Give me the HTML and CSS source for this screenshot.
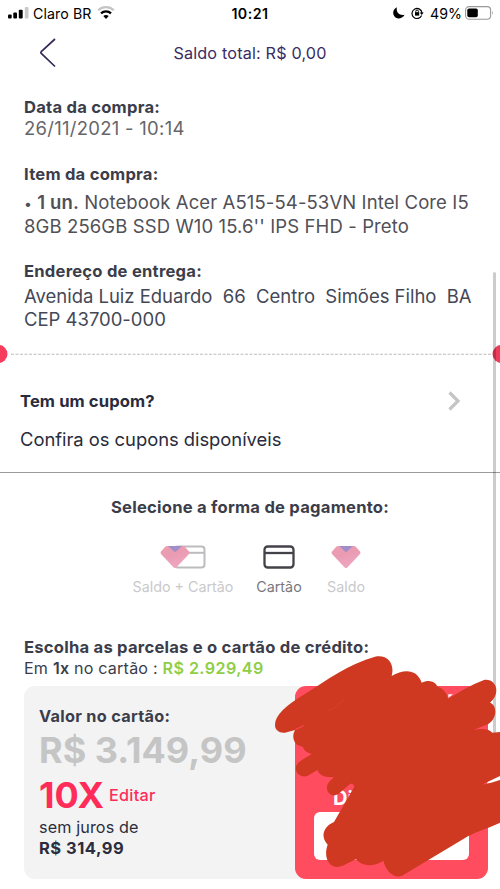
FILE: index.html
```html
<!DOCTYPE html>
<html lang="pt-BR">
<head>
<meta charset="utf-8">
<title>Pagamento</title>
<link rel="stylesheet" href="styles.css">
</head>
<body>
<div class="screen">
  <div class="status">
    <div class="status-left">
      <svg width="21" height="12" viewBox="0 0 21 12"><rect x="0" y="7.5" width="3.7" height="4" rx="1"/><rect x="5.3" y="5.5" width="3.7" height="6" rx="1"/><rect x="10.8" y="2.8" width="3.9" height="8.7" rx="1"/><rect x="16.8" y="0" width="3.7" height="11.5" rx="1" fill="#c9c9cb"/></svg>
      <span class="carrier">Claro BR</span>
      <svg width="18" height="14" viewBox="0 0 18 14" fill="none"><path d="M1.200 4.300C5.500.1 12.500.1 16.800 4.300" stroke="#c4c4c6" stroke-width="2.200"/><path d="M4 7.300c2.800-2.700 7.200-2.700 10 0" stroke="#000" stroke-width="2.300"/><path d="M6.300 10c1.600-1.500 3.800-1.500 5.400 0L9 12.900z" fill="#000"/></svg>
    </div>
    <span class="clock">10:21</span>
    <div class="status-right">
      <svg width="12" height="12" viewBox="0 0 12 12"><path d="M4 .3C2.600 5.500 6.500 9 11.600 7.700 8.800 12.700 2.800 12.500.9 8.600-.8 5.200.7 1.800 4 .3z"/></svg>
      <svg class="lock" width="13" height="12" viewBox="0 0 13 12" fill="none" stroke="#000" stroke-width="1.200"><path d="M10.600 8.500A5 5 0 1 1 11 6"/><path d="M8.700 5.500h4L10.800 8z" fill="#000" stroke="none"/><rect x="4" y="5.200" width="4.200" height="3.400" fill="#000" stroke="none"/><path d="M4.800 5.500V4.300a1.300 1.300 0 0 1 2.600 0v1.200" stroke-width="1"/></svg>
      <span class="percent">49%</span>
      <svg width="29" height="14" viewBox="0 0 29 14"><rect x=".6" y=".6" width="25" height="12.600" rx="3.500" fill="none" stroke="#999" stroke-width="1.100"/><rect x="2.300" y="2.500" width="10.500" height="8.800" rx="1.800"/><path d="M27.200 4.800q1.500 2 0 4z" fill="#999"/></svg>
    </div>
  </div>
  <header class="header">
    <svg class="back" width="18" height="30" viewBox="0 0 18 30" fill="none" stroke="#352758" stroke-width="1.700"><path d="M16 1 2.500 13.300q-1.300 1.200 0 2.400L16 28.500"/></svg>
    <span class="saldo">Saldo total: R$ 0,00</span>
  </header>
  <section class="details">
    <h2>Data da compra:</h2>
    <p class="date">26/11/2021 - 10:14</p>
    <h2>Item da compra:</h2>
    <p class="item"><small>•</small> <b>1 un.</b> Notebook Acer A515-54-53VN Intel Core I5<br>8GB 256GB SSD W10 15.6'' IPS FHD - Preto</p>
    <h2>Endereço de entrega:</h2>
    <p class="address">Avenida Luiz Eduardo&nbsp; 66&nbsp; Centro&nbsp; Simões Filho&nbsp; BA<br>CEP 43700-000</p>
  </section>
  <div class="perforation">
    <svg width="500" height="18" viewBox="0 0 500 18"><path d="M11 9.300H492" stroke="#bdbdc0" stroke-width="1.100" stroke-dasharray="3 1.500"/><circle cx="-1.500" cy="9" r="9" fill="#f73d5c"/><circle cx="501.500" cy="9" r="9" fill="#ee3b5a"/></svg>
  </div>
  <section class="coupon">
    <div class="coupon-row">
      <h2>Tem um cupom?</h2>
      <svg width="13" height="20" viewBox="0 0 13 20" fill="none" stroke="#c5c5c5" stroke-width="3.200"><path d="m1.500 1.500 8.500 8.500-8.500 8.500"/></svg>
    </div>
    <p>Confira os cupons disponíveis</p>
  </section>
  <section class="payment">
    <h2>Selecione a forma de pagamento:</h2>
    <div class="methods">
      <div class="method method-both">
        <svg width="46" height="24" viewBox="0 0 46 24"><rect x="15" y="1.500" width="29.500" height="21" rx="3" fill="#fff" stroke="#bcbcbe" stroke-width="2"/><path d="M20 7.800h24" stroke="#bcbcbe" stroke-width="2"/><use href="#heart"/></svg>
        <span>Saldo + Cartão</span>
      </div>
      <div class="method method-card">
        <svg width="32" height="24" viewBox="0 0 32 24" fill="none" stroke="#454149" stroke-width="2.300"><rect x="1.500" y="1.500" width="29" height="21" rx="3.200"/><path d="M2 8h28"/></svg>
        <span>Cartão</span>
      </div>
      <div class="method method-saldo">
        <svg width="30" height="24" viewBox="0 0 30 24"><defs><linearGradient id="pink" x1="0" y1="0" x2=".4" y2="1"><stop stop-color="#ef9fae"/><stop offset=".45" stop-color="#e99bb2"/><stop offset="1" stop-color="#efa5c0"/></linearGradient></defs><g id="heart"><path d="M7 1h16q1 0 2 1l4 4.500q1 1.300 0 2.500L16.300 22.600q-1.300 1-2.600 0L1 9Q0 7.700 1 6.500L5 2q1-1 2-1z" fill="url(#pink)"/><path d="M8 1h14l-6 5.600q-1 .8-2 0z" fill="#a08dca"/></g></svg>
        <span>Saldo</span>
      </div>
    </div>
  </section>
  <section class="installments">
    <h2>Escolha as parcelas e o cartão de crédito:</h2>
    <p class="once">Em <b>1x</b> no cartão : <strong>R$ 2.929,49</strong></p>
    <div class="cards">
      <div class="value-card">
        <h3>Valor no cartão:</h3>
        <div class="total">R$ 3.149,99</div>
        <div class="times"><strong>10X</strong><span>Editar</span></div>
        <p class="interest">sem juros de</p>
        <p class="parcel">R$ 314,99</p>
      </div>
      <div class="credit-card">
        <div class="card-label">Di</div>
        <div class="card-field"></div>
      </div>
    </div>
  </section>
  <i class="scrollbar"></i>
  <svg class="scribble" width="240" height="249" viewBox="0 0 720 747"><path fill="#fff" d="M565 163h14l-14 10zM680 433l5-12 35-16v16z"/><path fill="#cf3921" d="M45 255C45 225 80 195 130 165 200 120 270 70 345 50c38-8 60 22 50 58 35-20 75-23 90 20 25-12 43 0 47 12 18 5 30 20 32 36 36-21 72-43 108-56 37-5 52 40 18 68 22 7 22 47-5 64l-45 18c25-5 45-5 57 8l23-2V408l-55 26c25-4 40-9 55-14V548c-30 14-70 27-95 40L430 705c-25 15-52-10-60-43-25 17-62 20-82-4-18 7-38 22-56 23-27-1-42-31-29-67-23-24-13-54 19-68l61-106c-3-10-7-10-13-8l-35 30c-20 13-40-7-33-27 3-10 13-15 20-23-22 0-42-2-50-22l-30 18c-22 7-42-13-32-33 5-10 25-20 45-33-15-4-23-12-27-22-23-2-36-25-23-50l-30 8c-17 2-30-8-30-23z"/><path d="M106 269l25-12" stroke="#ff4c5e" stroke-width="3"/><path d="M205 212q28-10 46-33" stroke="#d74a35" stroke-width="2" fill="none"/></svg>
</div>
</body>
</html>
```
FILE: styles.css
```css
* { box-sizing: border-box; }
body { margin: 0; background: #fff; font-family: Inter, "Liberation Sans", sans-serif; color: #3b3d4a; }
h2, h3, p { margin: 0; white-space: nowrap; }
svg { display: block; flex: none; }
.screen { position: relative; width: 500px; height: 889px; overflow: hidden; }
.status { display: grid; grid-template-columns: 1fr auto 1fr; height: 26px; align-items: center; padding: 0 8px 0 8px; color: #000; font-size: 14.2px; }
.status-left, .status-right { display: flex; align-items: center; }
.carrier { margin: 0 5px 0 4px; letter-spacing: .1px; }
.clock { font-weight: 600; font-size: 14.2px; letter-spacing: .5px; }
.status-right { justify-content: flex-end; margin-right: -2px; }
.lock { margin: 0 6px; }
.percent { margin-right: 3px; }
.header { display: flex; align-items: center; justify-content: center; height: 55px; position: relative; }
.back { position: absolute; left: 39px; top: 12px; }
.saldo { color: #392b62; font-size: 16.2px; letter-spacing: .17px; padding-bottom: 2px; }
.details { padding: 16px 0 0 24px; height: 264px; }
h2 { font-size: 16.6px; line-height: 20px; font-weight: 700; letter-spacing: .23px; }
.details p { font-size: 18.5px; line-height: 23px; font-weight: 400; color: #505057; letter-spacing: .11px; }
.details .date { height: 47px; color: #66666a; letter-spacing: .27px; }
.details .item { margin-top: 7px; height: 70px; }
.item b { font-weight: 600; }
.item small { font-size: 14px; }
.details .address { margin-top: 4px; color: #444856; letter-spacing: -.02px; }
.perforation { height: 18px; }
.coupon { height: 110px; padding: 28px 39px 0 20px; border-bottom: 1px solid #9b9b9d; color: #292c3c; }
.coupon h2 { letter-spacing: .1px; }
.coupon-row { display: flex; align-items: center; justify-content: space-between; }
.coupon p { font-size: 18.4px; line-height: 24px; margin-top: 16px; letter-spacing: -.03px; }
.payment { height: 164px; padding-top: 24px; }
.payment h2 { text-align: center; }
.methods { display: flex; padding: 28px 0 0 132px; }
.method { display: flex; flex-direction: column; align-items: center; gap: 8px; font-size: 14.3px; line-height: 20px; color: #c9c9cc; white-space: nowrap; }
.method-both { width: 102px; }
.method-card { width: 46px; margin: 0 24px 0 22px; color: #77777c; }
.method-saldo { width: 40px; }
.installments { padding-left: 24px; }
.once { font-size: 16.1px; line-height: 21px; letter-spacing: .2px; padding-top: 1px; }
.once b { font-weight: 600; }
.once strong { color: #8fce45; font-weight: 600; letter-spacing: .45px; }
.cards { display: flex; width: 464px; height: 193px; margin-top: 7px; }
.value-card { width: 271px; background: #f3f3f3; border-radius: 11px 0 0 11px; padding: 20px 0 0 15px; color: #2b2d3d; }
.value-card h3 { font-size: 16.3px; line-height: 20px; color: #3b3d4a; letter-spacing: .3px; }
.total { font-size: 36px; line-height: 44px; font-weight: 700; color: #c5c5c5; white-space: nowrap; padding-top: 2px; }
.times { display: flex; align-items: center; gap: 5px; height: 45px; color: #ff2c59; }
.times strong { font-size: 36px; }
.times span { font-size: 16.2px; font-weight: 500; letter-spacing: .25px; }
.interest { font-size: 16.2px; line-height: 20px; letter-spacing: .12px; }
.parcel { font-size: 16.5px; line-height: 22px; font-weight: 700; letter-spacing: .5px; }
.credit-card { width: 193px; background: #ff4c5e; border-radius: 11px; padding: 98px 19px 19px; box-shadow: -11px 0 #f3f3f3; }
.card-label { color: #fff; font-size: 20px; line-height: 28px; font-weight: 700; padding-left: 19px; }
.card-field { background: #fff; border-radius: 6px; height: 48px; }
.scrollbar { position: absolute; left: 493px; top: 272px; width: 3px; height: 466px; border-radius: 2px; background: rgba(0, 0, 0, .2); }
.scribble { position: absolute; left: 260px; top: 640px; }
```
